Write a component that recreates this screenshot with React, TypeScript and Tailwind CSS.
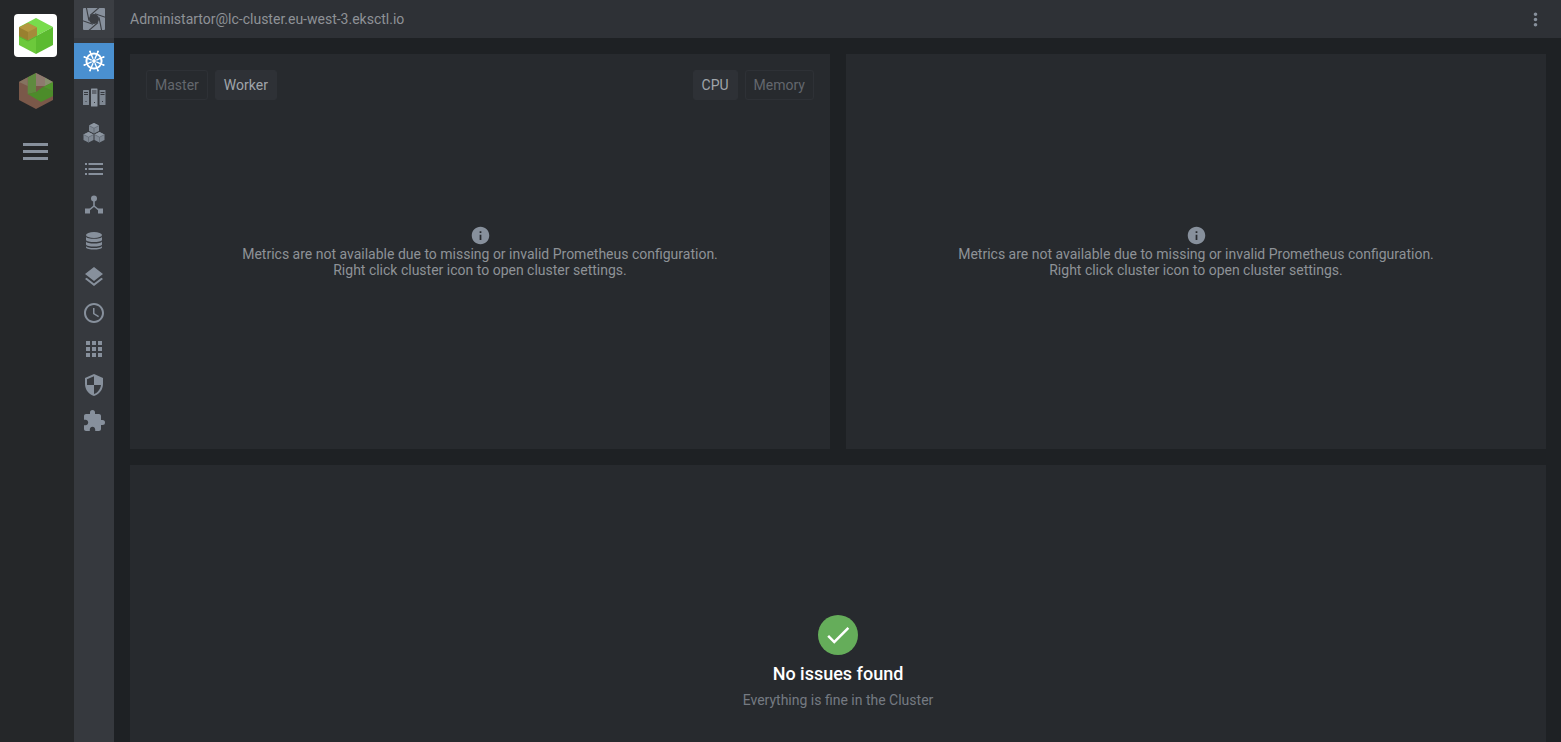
import React from "react";
import { MdSchedule, MdApps, MdSecurity, MdExtension, MdLayers, MdInfo, MdCheck, MdMoreVert } from "react-icons/md";

const font = { fontFamily: "Roboto, sans-serif" };

function Cube() {
  return (
    <svg width="38" height="38" viewBox="0 0 38 38">
      <polygon points="19,1 36,10 19,19 2,10" fill="#78dc4c" />
      <polygon points="19,19 36,10 36,28 19,37" fill="#5cbb30" />
      <polygon points="2,10 19,19 19,37 2,28" fill="#6cc93b" />
      <polygon points="2,10.5 11,6 20,10.5 20,18.5 11,23.5 2,19" fill="#a58a3a" />
      <polygon points="11,6 20,10.5 11,15 2,10.5" fill="#b4983f" />
      <polygon points="2,10.5 11,15 11,23.5 2,19" fill="#99802f" />
      <polygon points="11,23.5 20,18.5 20,19.5 11,24.5 2,20 2,19" fill="#5aaf30" />
    </svg>
  );
}

function CubeDim() {
  return (
    <svg width="38" height="38" viewBox="0 0 38 38">
      <polygon points="19,1 36,10 36,28 19,37 2,28 2,10" fill="#7a5849" />
      <polygon points="19,1 28,5.5 28,14 19,14" fill="#8e7a6e" />
      <polygon points="28,5.5 36,10 28,14" fill="#88906e" />
      <polygon points="28,14 36,10 36,19 26,15" fill="#4f962c" />
      <polygon points="10.7,5.3 19,1 19,20 10.7,22" fill="#5f8a3f" />
      <polygon points="2,10 10.7,5.3 10.7,14" fill="#857360" />
      <polygon points="10.7,22 19,20 26,15 36,19 36,24 24,30" fill="#4c8c2a" />
    </svg>
  );
}

function LensLogo() {
  const blades = [0, 60, 120, 180, 240, 300];
  return (
    <svg width="24" height="24" viewBox="0 0 24 24">
      <rect x="1" y="1" width="22" height="22" rx="1" fill="#87909c" />
      <g stroke="#3b3e43" strokeWidth="1.1">
        {blades.map((d) => (
          <line key={d} transform={`rotate(${d} 12 12)`} x1="8" y1="8.5" x2="20" y2="-2" />
        ))}
      </g>
      <rect x="0" y="0" width="24" height="1" fill="#3b3e43" />
      <rect x="0" y="23" width="24" height="1" fill="#3b3e43" />
      <rect x="0" y="0" width="1" height="24" fill="#3b3e43" />
      <rect x="23" y="0" width="1" height="24" fill="#3b3e43" />
      <circle cx="12" cy="12" r="5" fill="#3b3e43" />
    </svg>
  );
}

function Helm() {
  const spokes = [0, 1, 2, 3, 4, 5, 6, 7].map((i) => (i * 360) / 8 + 22.5);
  return (
    <svg width="24" height="24" viewBox="0 0 24 24" fill="none" stroke="#fff">
      <circle cx="12" cy="12" r="7.6" strokeWidth="2" />
      <circle cx="12" cy="12" r="1.9" fill="#fff" strokeWidth="0" />
      {spokes.map((d) => (
        <g key={d} transform={`rotate(${d} 12 12)`}>
          <line x1="12" y1="9.5" x2="12" y2="0.8" strokeWidth="1.4" />
          <circle cx="12" cy="1.8" r="0.9" fill="#fff" strokeWidth="0" />
        </g>
      ))}
    </svg>
  );
}

function Servers() {
  return (
    <svg width="24" height="24" viewBox="0 0 24 24" fill="#7f8893">
      <rect x="1" y="5" width="6" height="15" rx="0.5" />
      <rect x="9" y="3.5" width="6.5" height="18" rx="0.5" fill="#8e97a2" />
      <rect x="17.5" y="5" width="6" height="15" rx="0.5" />
      <g fill="#36393e">
        <rect x="2" y="7" width="4" height="1" />
        <rect x="2" y="9" width="4" height="1" />
        <rect x="10" y="5.5" width="4.5" height="1" />
        <rect x="10" y="7.5" width="4.5" height="1" />
        <rect x="18.5" y="7" width="4" height="1" />
        <rect x="18.5" y="9" width="4" height="1" />
        <rect x="3.5" y="16" width="1" height="1" />
        <rect x="12" y="17" width="1" height="1" />
        <rect x="20" y="16" width="1" height="1" />
      </g>
    </svg>
  );
}

function Cubes() {
  const c = (x: number, y: number) => (
    <g transform={`translate(${x} ${y})`}>
      <polygon points="5,0 10,2.6 10,8 5,10.6 0,8 0,2.6" fill="#7f8893" />
      <polygon points="5,0 10,2.6 5,5.2 0,2.6" fill="#8e97a2" />
      <line x1="5" y1="5.2" x2="5" y2="10.6" stroke="#5d646e" strokeWidth="0.7" />
      <polyline points="0,2.6 5,5.2 10,2.6" fill="none" stroke="#5d646e" strokeWidth="0.7" />
    </g>
  );
  return (
    <svg width="24" height="24" viewBox="0 0 24 24">
      {c(7, 2)}
      {c(1.5, 11)}
      {c(12.5, 11)}
    </svg>
  );
}

function ListIcon() {
  return (
    <svg width="24" height="24" viewBox="0 0 24 24" fill="#87909c">
      <rect x="3" y="6" width="2" height="2" />
      <rect x="3" y="11" width="2" height="2" />
      <rect x="3" y="16" width="2" height="2" />
      <rect x="6.5" y="6" width="14.5" height="2" />
      <rect x="6.5" y="11" width="14.5" height="2" />
      <rect x="6.5" y="16" width="14.5" height="2" />
    </svg>
  );
}

function Hub() {
  return (
    <svg width="24" height="24" viewBox="0 0 24 24" fill="#87909c">
      <circle cx="12" cy="5.5" r="3" />
      <rect x="3" y="15.5" width="5" height="5" />
      <rect x="16" y="15.5" width="5" height="5" />
      <path d="M12 8 V13 M12 13 L6 18 M12 13 L18 18" stroke="#87909c" strokeWidth="1.6" fill="none" />
    </svg>
  );
}

function Db() {
  return (
    <svg width="24" height="24" viewBox="0 0 24 24" fill="#87909c">
      <ellipse cx="12" cy="6" rx="8" ry="3" />
      <path d="M4 7.8 C5 10.5 19 10.5 20 7.8 V11 C19 13.7 5 13.7 4 11Z" />
      <path d="M4 12.4 C5 15.1 19 15.1 20 12.4 V15.5 C19 18.2 5 18.2 4 15.5Z" />
      <path d="M4 17 C5 19.7 19 19.7 20 17 V18.5 C19 21.2 5 21.2 4 18.5Z" />
    </svg>
  );
}

const cls = "text-[#87909c] text-2xl";
const navIcons = [
  <Servers />,
  <Cubes />,
  <ListIcon />,
  <Hub />,
  <Db />,
  <MdLayers className={cls} />,
  <MdSchedule className={cls} />,
  <MdApps className={cls} />,
  <MdSecurity className={cls} />,
  <MdExtension className={cls} />,
];

function Toggle({ label, active }: { label: string; active?: boolean }) {
  return (
    <div
      className={
        "h-[30px] px-2 flex items-center rounded-[3px] border text-sm " +
        (active
          ? "bg-[#2e3136] border-[#2e3136] text-[#a0a5ab]"
          : "border-[#2e3136] text-[#63676d]")
      }
    >
      {label}
    </div>
  );
}

function NoMetrics() {
  return (
    <div className="flex-1 flex flex-col items-center justify-center pb-[30px] text-sm leading-4 text-[#8e9297] text-center">
      <MdInfo className="text-[#87909c] text-[21px]" />
      <div>Metrics are not available due to missing or invalid Prometheus configuration.</div>
      <div>Right click cluster icon to open cluster settings.</div>
    </div>
  );
}

export default function App() {
  return (
    <div className="flex h-[742px] w-[1561px] overflow-hidden bg-[#1e2124]" style={font}>
      <aside className="w-[74px] shrink-0 bg-[#252729] flex flex-col items-center pt-[14px] pr-[3px]">
        <div className="w-[43px] h-[43px] bg-white rounded-[4px] flex items-center justify-center">
          <Cube />
        </div>
        <div className="mt-[14px] w-[43px] h-[40px] flex items-center justify-center">
          <CubeDim />
        </div>
        <div className="mt-[32px] flex flex-col gap-1 w-[25px]">
          <div className="h-[3px] bg-[#87909c]" />
          <div className="h-[3px] bg-[#87909c]" />
          <div className="h-[3px] bg-[#87909c]" />
        </div>
      </aside>

      <nav className="w-[40px] shrink-0 bg-[#36393e] flex flex-col">
        <div className="h-[38px] bg-[#3b3e43] flex items-center justify-center">
          <LensLogo />
        </div>
        <div className="mt-[5px] h-[36px] bg-[#4a90d0] flex items-center justify-center">
          <Helm />
        </div>
        {navIcons.map((icon, i) => (
          <div key={i} className="h-[36px] flex items-center justify-center">
            {icon}
          </div>
        ))}
      </nav>

      <div className="flex-1 min-w-0 flex flex-col">
        <header className="h-[38px] shrink-0 bg-[#2e3136] flex items-center justify-between pl-4 pr-[15px] text-sm text-[#8e9297]">
          <span>Administartor@lc-cluster.eu-west-3.eksctl.io</span>
          <MdMoreVert className="text-[#87909c] text-[21px]" />
        </header>
        <main className="flex-1 min-h-0 overflow-hidden pt-4 pl-4 pr-[15px] flex flex-col gap-4">
          <div className="flex gap-4 h-[395px] shrink-0">
            <section className="flex-1 bg-[#272a2e] p-4 flex flex-col">
              <div className="flex justify-between">
                <div className="flex gap-[7px]">
                  <Toggle label="Master" />
                  <Toggle label="Worker" active />
                </div>
                <div className="flex gap-[7px]">
                  <Toggle label="CPU" active />
                  <Toggle label="Memory" />
                </div>
              </div>
              <NoMetrics />
            </section>
            <section className="flex-1 bg-[#272a2e] p-4 flex flex-col">
              <div className="h-[30px]" />
              <NoMetrics />
            </section>
          </div>
          <section className="h-[420px] shrink-0 bg-[#272a2e] flex flex-col items-center pt-[150px]">
            <div className="w-10 h-10 rounded-full bg-[#65ad5a] flex items-center justify-center">
              <MdCheck className="text-white text-[30px]" />
            </div>
            <div className="mt-[8px] text-white font-medium text-lg leading-[22px]">No issues found</div>
            <div className="mt-[5px] text-sm text-[#757a82] leading-5">Everything is fine in the Cluster</div>
          </section>
        </main>
      </div>
    </div>
  );
}
